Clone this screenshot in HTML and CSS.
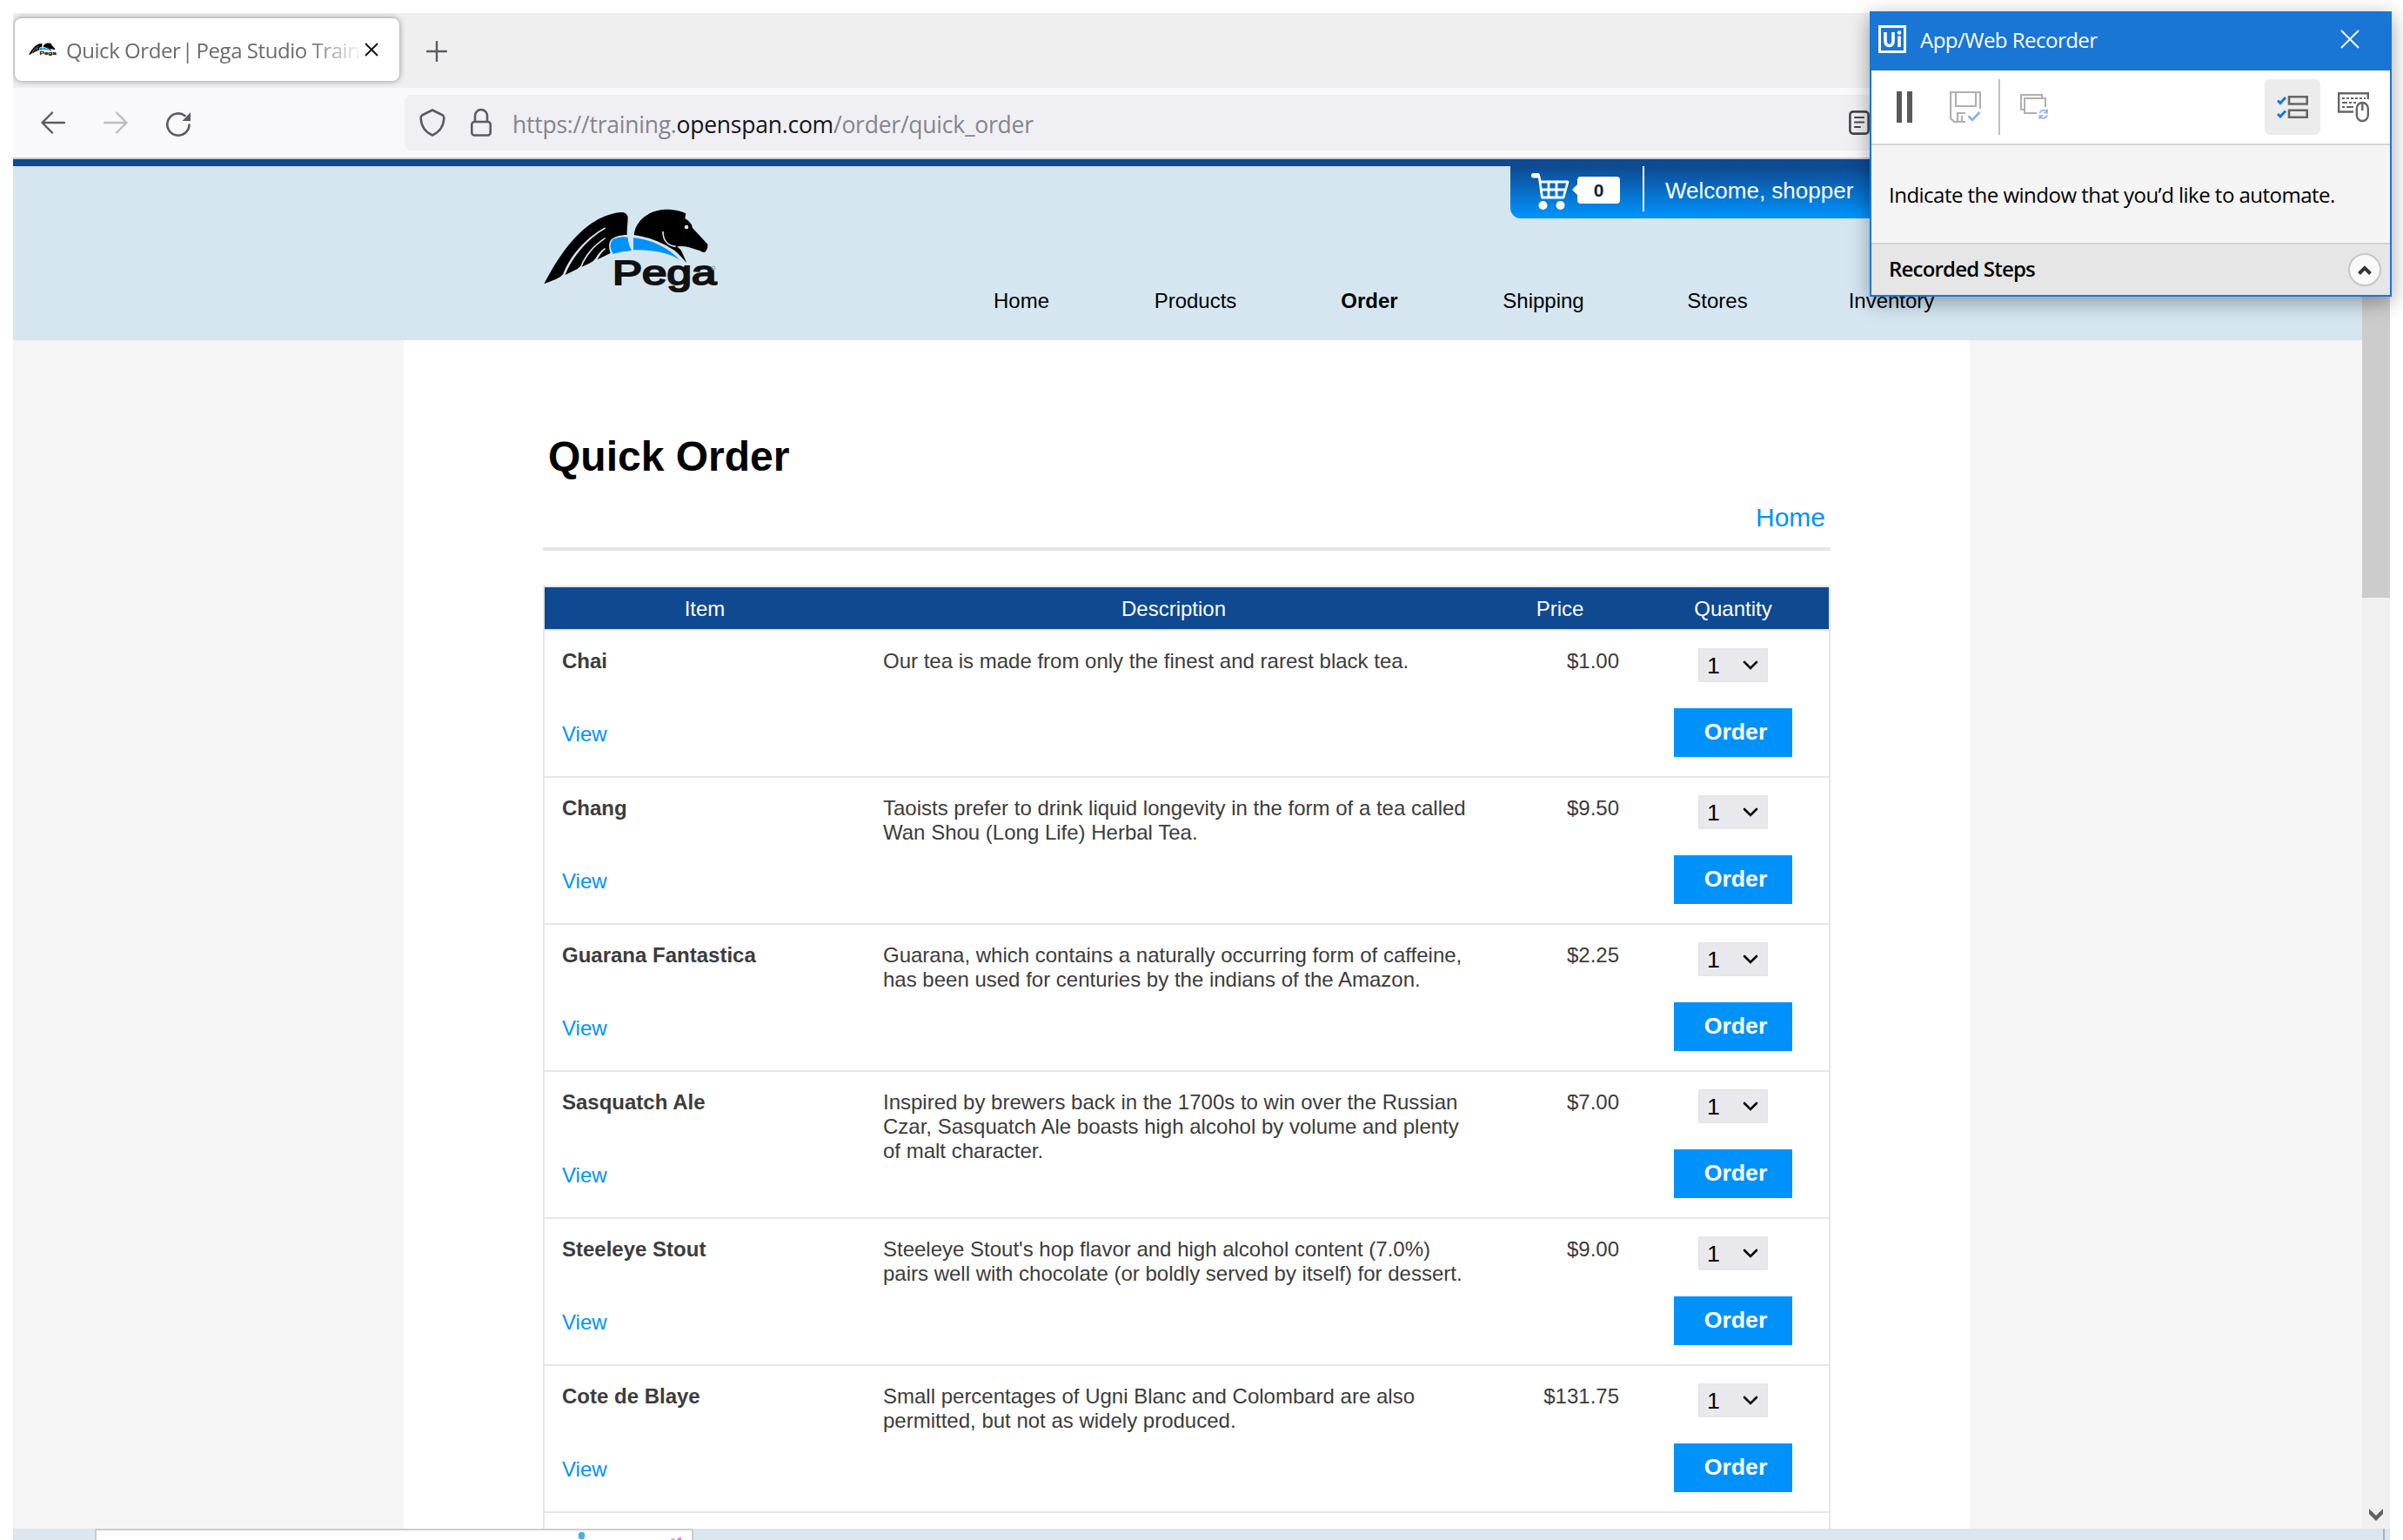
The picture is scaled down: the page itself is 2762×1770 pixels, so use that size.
FILE: index.html
```html
<!DOCTYPE html>
<html lang="en">
<head>
<meta charset="utf-8">
<title>Quick Order | Pega Studio Training</title>
<link rel="stylesheet" href="styles.css">
</head>
<body>
<svg width="0" height="0" class="defs">
  <symbol id="pega" viewBox="75 60 600 288">
    <path fill="#000" d="M76 319 C130 215 215 85 340 72 Q360 71 365 88 C365 110 361 130 362 150 C340 150 316 156 306 168 C298 180 299 195 305 213 L260 235 C268 220 276 208 288 199 L286 195 C272 203 262 216 253 232 Q246 243 232 248 L206 260 C222 222 248 190 288 163 L286 159 C246 184 217 220 202 257 Q192 268 178 274 L149 288 C172 228 222 166 288 128 L286 124 C218 162 165 224 142 285 Q132 297 118 302 Z"/>
    <path fill="#000" d="M386 150 C392 98 440 64 495 62 C525 62 550 68 565 76 L562 94 Q584 104 588 126 Q610 150 640 182 Q642 198 630 210 Q622 211 614 205 L574 192 Q556 187 534 190 Q548 200 552 210 L568 247 C548 224 534 206 510 194 C470 170 430 156 386 150 Z"/>
    <path fill="none" stroke="#d5e6f1" stroke-width="5" d="M486 138 C486 166 500 187 530 190"/>
    <circle cx="567" cy="123" r="7" fill="#d5e6f1"/>
    <path fill="#0092fb" d="M313 165 Q336 154 365 158 Q366 182 378 204 Q346 206 314 215 Q296 188 313 165 Z M384 160 C450 166 510 198 543 236 C500 208 440 200 384 202 Z"/>
    <text x="312" y="320" font-size="114" textLength="358" lengthAdjust="spacingAndGlyphs" fill="#111" stroke="#111" stroke-width="6">Pega</text>
    <circle cx="660" cy="264" r="6" fill="none" stroke="#8c979e" stroke-width="3"/>
  </symbol>
  <symbol id="chev" viewBox="0 0 20 14"><path d="M3 3 L10 10 L17 3" fill="none" stroke="#000" stroke-width="2.6" stroke-linecap="round"/></symbol>
</svg>

<div class="desktop">
  <div class="browser">
    <div class="tabbar">
      <div class="tab">
        <svg class="favicon" width="32" height="18" preserveAspectRatio="none"><use href="#pega"/></svg>
        <div class="tab-title">Quick Order <span class="pipe">|</span> Pega Studio Traini</div>
        <svg class="tab-close" width="16" height="16" viewBox="0 0 16 16"><path d="M1 1 L15 15 M15 1 L1 15" stroke="#15141a" stroke-width="2"/></svg>
      </div>
      <svg class="plus" width="24" height="24" viewBox="0 0 24 24"><path d="M12 1 V23 M1 12 H23" stroke="#5b5b66" stroke-width="2.4" stroke-linecap="round"/></svg>
    </div>
    <div class="toolbar">
      <svg width="28" height="28" viewBox="0 0 28 28"><path d="M27 14 H1.5 M13 2.5 L1.5 14 L13 25.5" fill="none" stroke="#5b5b66" stroke-width="2.4" stroke-linecap="round" stroke-linejoin="round"/></svg>
      <svg width="28" height="28" viewBox="0 0 28 28"><path d="M1 14 H26.5 M15 2.5 L26.5 14 L15 25.5" fill="none" stroke="#bcbcc2" stroke-width="2.4" stroke-linecap="round" stroke-linejoin="round"/></svg>
      <svg class="reload" width="28" height="28" viewBox="0 0 28 28"><path d="M26.5 14.5 A12.6 12.6 0 1 1 21.5 4" fill="none" stroke="#5b5b66" stroke-width="2.6" stroke-linecap="round"/><path d="M28 0 V10 H18.5 Z" fill="#5b5b66"/></svg>
      <div class="urlbar">
        <svg width="30" height="34" viewBox="0 0 30 34"><path d="M15 2.5 L27 8.5 Q28.5 9.5 28.3 12 Q27.5 26 15 31.5 Q2.5 26 1.7 12 Q1.5 9.5 3 8.5 Z" fill="none" stroke="#5b5b66" stroke-width="2.6" stroke-linejoin="round"/></svg>
        <svg class="lock" width="24" height="34" viewBox="0 0 24 34"><rect x="1.3" y="16" width="21.4" height="15.5" rx="3" fill="none" stroke="#5b5b66" stroke-width="2.6"/><path d="M5 16 V9 a7 7 0 0 1 14 0 V16" fill="none" stroke="#5b5b66" stroke-width="2.6"/></svg>
        <div class="url">https://training.<b>openspan.com</b>/order/quick_order</div>
        <svg class="reader" width="24" height="28" viewBox="0 0 24 28"><rect x="1.4" y="1.4" width="21.2" height="25.2" rx="3.5" fill="none" stroke="#47464e" stroke-width="2.6"/><path d="M7 8 H17 M7 13.5 H17 M7 19 H13" stroke="#47464e" stroke-width="2.2" stroke-linecap="round"/></svg>
      </div>
    </div>
    <div class="viewport">
      <div class="page">
        <header class="site-header">
          <svg class="logo" width="200" height="96"><use href="#pega"/></svg>
          <div class="header-right">
            <div class="account">
              <svg class="cart" width="44" height="44" viewBox="0 0 44 44"><path d="M2 4 H7 Q9 4 9.5 7 L12.5 29 H37 L42 11 H10 M11 20 H39 M20 11 V29 M29 11 V29" fill="none" stroke="#fff" stroke-width="2.8" stroke-linejoin="round"/><rect x="0" y="1" width="10" height="5.5" rx="2.5" fill="#fff"/><circle cx="13.5" cy="38" r="5" fill="#fff"/><circle cx="33.5" cy="38" r="5" fill="#fff"/></svg>
              <div class="count">0</div>
              <div class="welcome">Welcome, shopper</div>
            </div>
            <nav class="nav"><a>Home</a><a>Products</a><a class="current">Order</a><a>Shipping</a><a>Stores</a><a>Inventory</a></nav>
          </div>
        </header>
        <main class="content">
          <h1>Quick Order</h1>
          <a class="crumb">Home</a>
          <div class="rule"></div>
          <div class="table">
            <div class="row head"><div>Item</div><div>Description</div><div>Price</div><div>Quantity</div></div>
            <div class="row"><div class="item"><strong>Chai</strong><a>View</a></div><div class="desc">Our tea is made from only the finest and rarest black tea.</div><div class="price">$1.00</div><div class="qty"><div class="select">1<svg width="20" height="14"><use href="#chev"/></svg></div><div class="btn">Order</div></div></div>
            <div class="row"><div class="item"><strong>Chang</strong><a>View</a></div><div class="desc">Taoists prefer to drink liquid longevity in the form of a tea called Wan Shou (Long Life) Herbal Tea.</div><div class="price">$9.50</div><div class="qty"><div class="select">1<svg width="20" height="14"><use href="#chev"/></svg></div><div class="btn">Order</div></div></div>
            <div class="row"><div class="item"><strong>Guarana Fantastica</strong><a>View</a></div><div class="desc">Guarana, which contains a naturally occurring form of caffeine, has been used for centuries by the indians of the Amazon.</div><div class="price">$2.25</div><div class="qty"><div class="select">1<svg width="20" height="14"><use href="#chev"/></svg></div><div class="btn">Order</div></div></div>
            <div class="row"><div class="item"><strong>Sasquatch Ale</strong><a>View</a></div><div class="desc">Inspired by brewers back in the 1700s to win over the Russian Czar, Sasquatch Ale boasts high alcohol by volume and plenty of malt character.</div><div class="price">$7.00</div><div class="qty"><div class="select">1<svg width="20" height="14"><use href="#chev"/></svg></div><div class="btn">Order</div></div></div>
            <div class="row"><div class="item"><strong>Steeleye Stout</strong><a>View</a></div><div class="desc">Steeleye Stout's hop flavor and high alcohol content (7.0%) pairs well with chocolate (or boldly served by itself) for dessert.</div><div class="price">$9.00</div><div class="qty"><div class="select">1<svg width="20" height="14"><use href="#chev"/></svg></div><div class="btn">Order</div></div></div>
            <div class="row"><div class="item"><strong>Cote de Blaye</strong><a>View</a></div><div class="desc">Small percentages of Ugni Blanc and Colombard are also permitted, but not as widely produced.</div><div class="price">$131.75</div><div class="qty"><div class="select">1<svg width="20" height="14"><use href="#chev"/></svg></div><div class="btn">Order</div></div></div>
          </div>
        </main>
      </div>
      <div class="scrollbar">
        <div class="thumb"></div>
        <svg width="16" height="14" viewBox="0 0 16 14"><path d="M0 0 L8 8 L16 0 V6 L8 14 L0 6 Z" fill="#606060"/></svg>
      </div>
    </div>
  </div>
  <div class="behind">
    <div class="panel">
      <svg width="684" height="11" viewBox="0 0 684 11"><ellipse cx="557.5" cy="6" rx="3.8" ry="4.2" fill="#4bb0e0"/><path d="M660 11 l1 -1.500 h3 l1 1.500 Z M667 11 q1 -3 5 -3 v3 Z" fill="#d77fe6"/></svg>
    </div>
    <div class="edge"></div>
  </div>
</div>

<aside class="recorder">
  <div class="rec-title">
    <svg width="32" height="32" viewBox="0 0 32 32"><rect width="32" height="32" fill="#fff"/><rect x="3" y="3" width="26" height="26" fill="#1a76d4"/><path d="M8 8 V18 Q8 23.5 12.5 23.5 Q17 23.5 17 18 V8" fill="none" stroke="#fff" stroke-width="3.6"/><path d="M24 12.5 V25" stroke="#fff" stroke-width="3.6"/><circle cx="24" cy="8.5" r="2.3" fill="#fff"/></svg>
    <span>App/Web Recorder</span>
    <svg class="rec-close" width="22" height="22" viewBox="0 0 22 22"><path d="M1 1 L21 21 M21 1 L1 21" stroke="#fff" stroke-width="1.8"/></svg>
  </div>
  <div class="rec-tools">
    <svg class="pause" width="18" height="36" viewBox="0 0 18 36"><path d="M0 0 h6 v36 h-6 Z M12 0 h6 v36 h-6 Z" fill="#58595b"/></svg>
    <svg class="save" width="36" height="36" viewBox="0 0 36 36"><path d="M35 20 V1 H1 V31 L5 35 H18 M7 1 V17 H30 V1 M9 35 V25 H18 M14 28 V35" fill="none" stroke="#b0b0b0" stroke-width="2.2"/><path d="M21.5 28.5 L26 33 L34.5 24" fill="none" stroke="#7fb2ee" stroke-width="2.6"/></svg>
    <div class="sep"></div>
    <svg class="wins" width="34" height="30" viewBox="0 0 34 30"><path d="M5 18 H1 V1 H25 V5 M19 22 H5 V5 H29 V15" fill="none" stroke="#b0b0b0" stroke-width="2"/><path d="M22.5 22 Q24 18.5 27 18.5 Q29 18.5 30.5 20.5 M31 17.5 V21.5 H27 M31 24.5 Q29.5 28 26.5 28 Q24.5 28 23 26 M22.5 29 V25 H26.5" fill="none" stroke="#7fb2ee" stroke-width="1.7"/></svg>
    <div class="toggle"><svg width="36" height="26" viewBox="0 0 36 26"><path d="M14 1.3 H34.7 V9.5 H14 Z M14 16.8 H34.7 V24.9 H14 Z" fill="none" stroke="#666" stroke-width="2.6"/><path d="M1 5.5 L4 8.500 L10 2 M1 21 L4 24 L10 17.5" fill="none" stroke="#1a76d4" stroke-width="3"/></svg></div>
    <svg class="keys" width="36" height="36" viewBox="0 0 36 36"><path d="M34.8 9 V2.2 H1.2 V23.5 H18" fill="none" stroke="#666" stroke-width="2.4"/><path d="M5 8 H32" stroke="#666" stroke-width="2.2" stroke-dasharray="3 2"/><path d="M5 13 H11 M13 13 H16 M18 13 H21 M5 18 H8 M10 18 H18" stroke="#666" stroke-width="2.2"/><rect x="21.8" y="13" width="13" height="21" rx="6.5" fill="#fff" stroke="#666" stroke-width="2.4"/><path d="M28.3 13 V22" stroke="#666" stroke-width="2.4"/></svg>
  </div>
  <div class="rec-msg">Indicate the window that you’d like to automate.</div>
  <div class="rec-steps"><span>Recorded Steps</span><div class="collapse"><svg width="16" height="11" viewBox="0 0 16 11"><path d="M1.5 9.5 L8 3 L14.5 9.5" fill="none" stroke="#333" stroke-width="4"/></svg></div></div>
</aside>
</body>
</html>
```
FILE: styles.css
```css
* { box-sizing: border-box; }
body { margin: 0; width: 2762px; height: 1770px; overflow: hidden; background: #fff; font-family: "Liberation Sans", Arial, sans-serif; font-size: 24px; line-height: 28px; color: #000; }
svg { display: block; flex: none; }
.defs { position: absolute; }

.desktop { height: 1770px; padding: 15px 15px 0; display: flex; flex-direction: column; }
.browser { height: 1742px; display: flex; flex-direction: column; }
.tabbar { height: 86px; background: #efefef; display: flex; padding: 6px 0 0 2px; overflow: hidden; }
.tab { width: 442px; height: 72px; border-radius: 8px; background: #fff; box-shadow: 0 0 7px rgba(0,0,0,.42); display: flex; align-items: center; padding-left: 16px; }
.tab-title { width: 340px; margin-left: 11px; overflow: hidden; white-space: nowrap; font: 24px/36px "Open Sans", "Noto Sans", sans-serif; letter-spacing: -.45px; color: #6b6b6b; padding-top: 2px; -webkit-mask-image: linear-gradient(90deg, #000 278px, transparent 342px); mask-image: linear-gradient(90deg, #000 278px, transparent 342px); }
.pipe { margin: 0 -2px 0 -4px; }
.tab-close { margin-left: 3px; }
.plus { margin: 26px 0 0 31px; }
.toolbar { height: 82px; background: #f9f9fb; border-bottom: 2px solid #ccc; display: flex; align-items: center; padding-left: 32px; gap: 44px; }
.reload { margin-top: 3px; }
.urlbar { flex: 1; height: 64px; margin-left: 202px; background: #f0eff4; border-radius: 8px; display: flex; align-items: center; padding-left: 17px; }
.lock { margin-left: 29px; }
.url { margin-left: 24px; font: 26.5px/36px "Open Sans", "Noto Sans", sans-serif; letter-spacing: -.24px; color: #85848c; padding-top: 4px; width: 1536px; }
.url b { font-weight: 400; color: #15141a; }

.viewport { flex: 1; min-height: 0; display: flex; }
.page { width: 2700px; background: #f5f5f5; border-top: 8px solid #0f4991; display: flex; flex-direction: column; }
.site-header { flex: none; height: 200px; background: #d5e6f1; display: flex; padding-left: 610px; }
.logo { margin-top: 49px; }
.header-right { margin-left: 249px; width: 1200px; }
.account { width: 528px; height: 60px; margin-left: 662px; background: linear-gradient(#0f4991, #0092fb 96%); border-radius: 0 0 12px 12px; display: flex; padding-left: 24px; color: #fff; }
.cart { margin-top: 7px; }
.count { width: 49px; height: 31px; margin: 12px 0 0 9px; border-radius: 4px; background: #fff; color: #0b2340; font-weight: 700; font-size: 21px; line-height: 31px; text-align: center; position: relative; }
.count::before { content: ""; position: absolute; left: -6px; top: 8px; border: 7px solid transparent; border-left: 0; border-right: 7px solid #fff; }
.welcome { height: 52px; margin-left: 26px; border-left: 2px solid #fff; padding-left: 24px; font-size: 26px; line-height: 57px; white-space: nowrap; }
.nav { display: grid; grid-template-columns: repeat(6, 200px); margin-top: 81px; text-align: center; }
.current { font-weight: 700; }

.content { flex: 1; min-height: 0; width: 1800px; margin-left: 449px; padding: 106px 160px 0; background: #fff; display: flex; flex-direction: column; }
h1 { margin: 0 0 25px 6px; font-size: 48px; line-height: 56px; }
.crumb { align-self: flex-end; margin-right: 6px; font-size: 30px; line-height: 34px; color: #0092fb; }
.rule { height: 4px; flex: none; margin: 17px 0 40px; background: #e6e6e6; }
.table { flex: 1; min-height: 0; border: 2px solid #e6e6e6; border-bottom: 0; }
.row { display: grid; grid-template-columns: 368px 710px 178px 220px; height: 169px; border-bottom: 2px solid #e6e6e6; padding-top: 21px; color: #3c3c3c; }
.head { height: 50px; padding-top: 11px; background: #0f4991; background-clip: padding-box; color: #fff; text-align: center; }
.item { padding-left: 20px; display: flex; flex-direction: column; gap: 56px; }
.item a { color: #0092fb; }
.desc { padding: 0 9px 0 21px; }
.price { padding-right: 21px; text-align: right; }
.qty { display: flex; flex-direction: column; align-items: center; gap: 30px; margin-top: -1px; }
.select { width: 80px; height: 39px; border: 2px solid #e6e6e6; background: #e9e9ed; color: #000; font-size: 26.67px; display: flex; align-items: center; justify-content: space-between; padding: 1px 8px 0 8px; }
.btn { width: 136px; height: 56px; background: #0092fb; color: #fff; font-weight: 700; font-size: 26.67px; line-height: 55px; text-align: center; padding-left: 6px; }
.scrollbar { width: 32px; background: #f0f0f0; display: flex; flex-direction: column; justify-content: space-between; align-items: center; padding: 0 0 9px 0; }
.thumb { width: 32px; height: 504px; background: #ccc; }

.behind { height: 13px; background: #dbe6ee; display: flex; justify-content: space-between; }
.panel { width: 688px; margin-left: 94px; border: 2px solid #ccc; border-bottom: 0; background: #fff; overflow: hidden; }
.edge { width: 2px; margin-right: 6px; background: #aab4bf; }

.recorder { position: absolute; left: 2149px; top: 13px; width: 600px; height: 328px; border: 2px solid #1a76d4; border-top: 0; background: #f4f4f4; box-shadow: 0 6px 22px rgba(0,0,0,.36); font: 24px/32px "Open Sans", "Noto Sans", sans-serif; letter-spacing: -.52px; display: flex; flex-direction: column; }
.rec-title { height: 68px; background: #1a76d4; color: #fff; display: flex; align-items: center; padding: 0 35px 4px 8px; }
.rec-title span { margin: 2px 0 0 16px; }
.rec-close { margin-left: auto; }
.rec-tools { height: 86px; background: #fff; border-bottom: 2px solid #d4d4d4; display: flex; align-items: center; padding-left: 29px; }
.save { margin-left: 43px; }
.sep { width: 2px; height: 64px; margin-left: 20px; background: #bfbfbf; }
.wins { margin-left: 23px; }
.toggle { width: 64px; height: 64px; margin-left: 247px; border-radius: 6px; background: #ececec; display: flex; align-items: center; justify-content: center; }
.keys { margin-left: 20px; }
.rec-msg { height: 114px; border-bottom: 2px solid #d4d4d4; padding: 41px 0 0 20px; white-space: nowrap; }
.rec-steps { flex: 1; background: #e6e6e6; display: flex; align-items: center; justify-content: space-between; padding: 0 10px 0 20px; font-weight: 600; letter-spacing: -.8px; }
.rec-steps span { margin-top: -3px; }
.collapse { width: 38px; height: 38px; border: 2px solid #c6c6c6; border-radius: 50%; background: #f9f9f9; display: flex; align-items: center; justify-content: center; }
```
